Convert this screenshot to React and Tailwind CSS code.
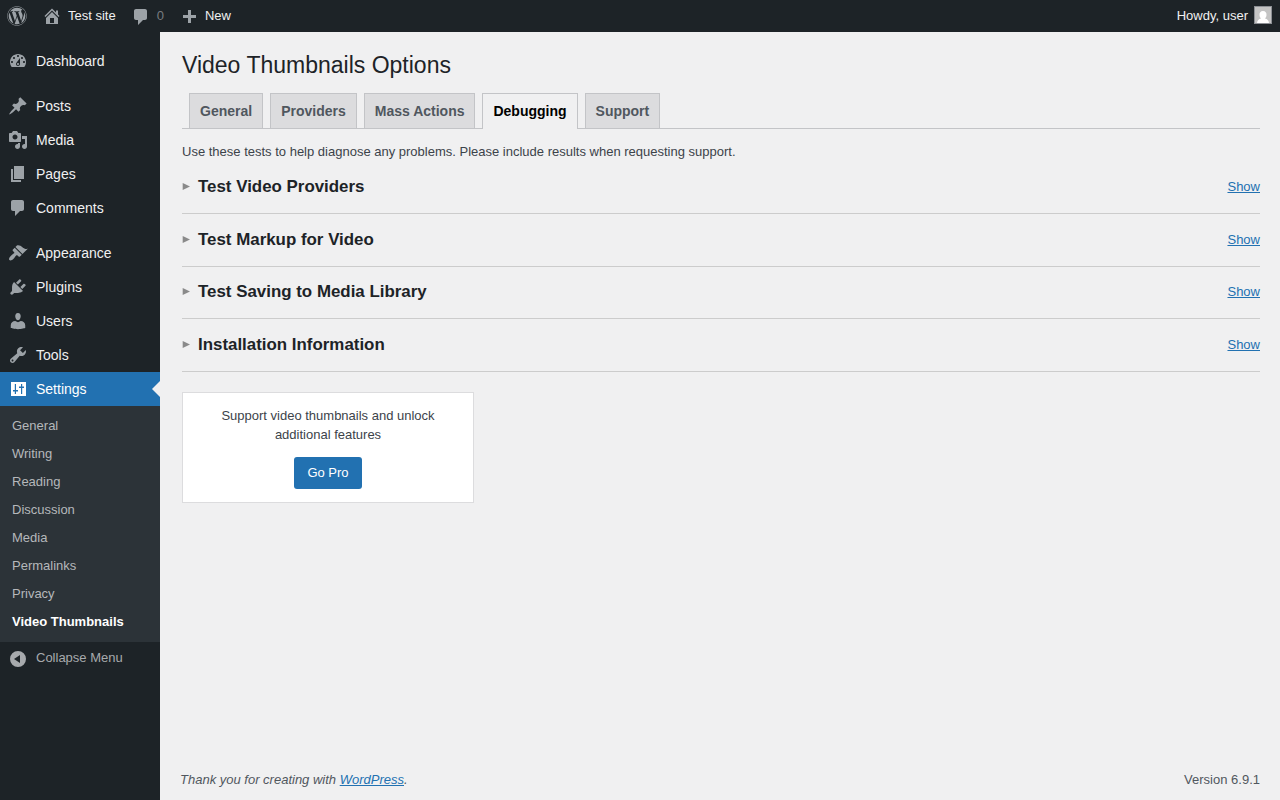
import React from "react";
import { FaWordpress } from "react-icons/fa";

const ICONS = {
  home: "M16 8.5l1.53 1.53-1.06 1.06L10 4.6l-6.47 6.49-1.06-1.06L10 2.5l4 4v-2h2v4zm-6-2.46l6 5.99V18H4v-5.97zM12 17v-5H8v5h4z",
  comments: "M5 2h9c1.1 0 2 .9 2 2v7c0 1.1-.9 2-2 2h-2l-5 5v-5H5c-1.1 0-2-.9-2-2V4c0-1.1.9-2 2-2z",
  plus: "M17 8v3h-5v5H9v-5H4V8h5V3h3v5h5z",
  dashboard:
    "M3.76 16h12.48c1.1-1.37 1.76-3.11 1.76-5 0-4.42-3.58-8-8-8s-8 3.58-8 8c0 1.89.66 3.63 1.76 5zM10 4c.55 0 1 .45 1 1s-.45 1-1 1-1-.45-1-1 .45-1 1-1zM6 6c.55 0 1 .45 1 1s-.45 1-1 1-1-.45-1-1 .45-1 1-1zm8 0c.55 0 1 .45 1 1s-.45 1-1 1-1-.45-1-1 .45-1 1-1zm-5.37 5.55L12 7v6c0 1.1-.9 2-2 2s-2-.9-2-2c0-.57.24-1.08.63-1.45zM4 10c.55 0 1 .45 1 1s-.45 1-1 1-1-.45-1-1 .45-1 1-1zm12 0c.55 0 1 .45 1 1s-.45 1-1 1-1-.45-1-1 .45-1 1-1zm-5 3c0-.55-.45-1-1-1s-1 .45-1 1 .45 1 1 1 1-.45 1-1z",
  post: "M10.44 3.02l1.82-1.82 6.36 6.35-1.83 1.82c-1.05-.68-2.48-.57-3.41.36l-.75.75c-.92.93-1.04 2.35-.35 3.41l-1.83 1.82-2.41-2.41-2.8 2.79c-.42.42-3.38 2.71-3.8 2.29s1.86-3.39 2.28-3.81l2.79-2.79L4.1 9.36l1.83-1.82c1.05.69 2.48.57 3.4-.36l.75-.75c.93-.92 1.05-2.35.36-3.41z",
  media:
    "M13 11V4c0-.55-.45-1-1-1h-1.67L9 1H5L3.67 3H2c-.55 0-1 .45-1 1v7c0 .55.45 1 1 1h10c.55 0 1-.45 1-1zM7 4.5c1.38 0 2.5 1.12 2.5 2.5S8.38 9.5 7 9.5 4.5 8.38 4.5 7 5.62 4.5 7 4.5zM14 6h5v10.5c0 1.38-1.12 2.5-2.5 2.5S14 17.88 14 16.5s1.12-2.5 2.5-2.5c.17 0 .34.02.5.05V9h-3V6zm-4 8.05V13h2v3.5c0 1.38-1.12 2.5-2.5 2.5S7 17.88 7 16.5 8.12 14 9.5 14c.17 0 .34.02.5.05z",
  page: "M6 15V2h10v13H6zm-1 1h8v2H3V5h2v11z",
  appearance:
    "M14.48 11.06L7.41 3.99l1.5-1.5c.5-.56 2.3-.47 3.51.32 1.21.8 1.43 1.28 2.91 2.1 1.18.64 2.45 1.26 4.45.85zm-.71.71L6.7 4.7 4.93 6.47c-.39.39-.39 1.02 0 1.41l1.06 1.06c.39.39.39 1.03 0 1.42-.6.6-1.43 1.11-2.21 1.69-.35.26-.7.53-1.01.84C1.43 14.23.4 16.08 1.4 17.07c.99 1 2.84-.03 4.18-1.36.31-.31.58-.66.85-1.02.57-.78 1.08-1.61 1.69-2.21.39-.39 1.02-.39 1.41 0l1.06 1.06c.39.39 1.02.39 1.41 0z",
  plugins:
    "M13.11 4.36L9.87 7.6 8 5.73l3.24-3.24c.35-.34 1.05-.2 1.56.32.52.51.66 1.21.31 1.55zm-8 1.77l.91-1.12 9.01 9.01-1.19.84c-.71.71-2.63 1.16-3.82 1.16H6.14L4.9 17.26c-.59.59-1.54.59-2.12 0-.59-.58-.59-1.53 0-2.12l1.24-1.24v-3.88c0-1.13.4-3.19 1.09-3.89zm7.26 3.97l3.24-3.24c.34-.35 1.04-.21 1.55.31.52.51.66 1.21.31 1.55l-3.24 3.25z",
  users:
    "M10 9.25c-2.27 0-2.73-3.44-2.73-3.44C7 4.02 7.82 2 9.97 2c2.16 0 2.98 2.02 2.71 3.81 0 0-.41 3.44-2.68 3.44zm0 2.1L12.72 10c2.39 0 4.52 1.900 4.52 4.200v2.800s-3.65 1.13-7.24 1.13c-3.65 0-7.24-1.13-7.24-1.13v-2.800c0-2.25 1.94-4.200 4.47-4.200z",
  tools:
    "M16.68 9.77c-1.34 1.34-3.3 1.67-4.95.99l-5.41 6.52c-.99.99-2.59.99-3.58 0s-.99-2.59 0-3.57l6.52-5.42c-.68-1.65-.35-3.61.99-4.95 1.28-1.28 3.12-1.62 4.72-1.06l-2.89 2.89 2.82 2.82 2.86-2.87c.53 1.58.18 3.39-1.08 4.65zM3.81 16.21c.4.39 1.04.39 1.43 0 .4-.4.4-1.04 0-1.43-.39-.4-1.03-.4-1.43 0-.39.39-.39 1.03 0 1.43z",
  settings:
    "M18 17V3H3v14h15zM8 11h2v1.500H8V15H6.800v-2.500H5V11h1.800V5H8v6zm5-2h-2V7.500h2V5h1.200v2.500H16V9h-1.800v6H13V9z",
  collapse: "M10 2a8 8 0 1 0 0 16 8 8 0 0 0 0-16zM12 14L6 10l6-4z",
};

function Icon({ name, className = "" }) {
  return (
    <svg viewBox="0 0 20 20" className={`size-5 shrink-0 fill-current ${className}`}>
      <path fillRule="evenodd" d={ICONS[name]} />
    </svg>
  );
}

const MENU = [
  [["dashboard", "Dashboard"]],
  [["post", "Posts"], ["media", "Media"], ["page", "Pages"], ["comments", "Comments"]],
  [["appearance", "Appearance"], ["plugins", "Plugins"], ["users", "Users"], ["tools", "Tools"], ["settings", "Settings"]],
];
const SUBMENU = ["General", "Writing", "Reading", "Discussion", "Media", "Permalinks", "Privacy", "Video Thumbnails"];
const TABS = ["General", "Providers", "Mass Actions", "Debugging", "Support"];
const TESTS = ["Test Video Providers", "Test Markup for Video", "Test Saving to Media Library", "Installation Information"];

function Toolbar() {
  return (
    <header className="flex h-8 shrink-0 items-center bg-[#1d2327] pr-2 pl-[7px] leading-8 text-[#f0f0f1]">
      <FaWordpress className="size-5 text-[#9ca2a7]" />
      <Icon name="home" className="ml-[15px] text-[#9ca2a7]" />
      <span className="ml-1.5">Test site</span>
      <Icon name="comments" className="mt-0.5 ml-[15px] text-[#9ca2a7]" />
      <span className="ml-1.5 text-[#787c80]">0</span>
      <Icon name="plus" className="mt-0.5 ml-[15px] text-[#9ca2a7]" />
      <span className="ml-1.5">New</span>
      <span className="ml-auto">Howdy, user</span>
      <svg viewBox="0 0 18 18" className="-mt-0.5 ml-1.5 size-[18px]">
        <path fill="#8c8f94" d="M0 0h18v18H0z" />
        <path fill="#c4c4c4" d="M1 1h16v16H1z" />
        <path fill="#fff" d="M9 5a3.800 3.800 0 0 1 3.500 4c0 1.500-.7 2.700-1.500 3.400 2.300.5 3.700 1.800 4 4.600H3c.3-2.800 1.700-4.100 4-4.600C6.200 11.700 5.500 10.500 5.500 9A3.800 3.800 0 0 1 9 5z" />
      </svg>
    </header>
  );
}

function Sidebar() {
  return (
    <nav className="w-40 shrink-0 bg-[#1d2327] pt-3">
      {MENU.map((group, i) => (
        <ul key={i} className="mb-[11px] last-of-type:mb-0">
          {group.map(([icon, label]) => {
            const active = label === "Settings";
            return (
              <li
                key={label}
                className={`flex h-[34px] items-center pl-2 text-sm ${active ? "bg-[#2271b1] text-white" : "text-[#f0f0f1]"}`}
              >
                <Icon name={icon} className={active ? "text-white" : "text-[#9ca2a7]"} />
                <span className="ml-2">{label}</span>
                {active && (
                  <span className="ml-auto border-y-8 border-r-8 border-y-transparent border-r-[#f0f0f1]" />
                )}
              </li>
            );
          })}
        </ul>
      ))}
      <div className="bg-[#2c3338] pt-1.5 pb-1.5 text-[#b5b8bb]">
        {SUBMENU.map((label) => (
          <div
            key={label}
            className={`h-7 pl-3 leading-7 ${label === "Video Thumbnails" ? "font-semibold text-white" : ""}`}
          >
            {label}
          </div>
        ))}
      </div>
      <div className="flex h-[34px] items-center pl-2 text-[#a7aaad]">
        <Icon name="collapse" />
        <span className="-mt-0.5 ml-2">Collapse Menu</span>
      </div>
    </nav>
  );
}

export default function App() {
  return (
    <div className="flex h-[800px] w-[1280px] flex-col overflow-hidden bg-[#f0f0f1] font-['Liberation_Sans',Arial,sans-serif] text-[13px] text-[#3c434a]">
      <Toolbar />
      <div className="flex grow">
        <Sidebar />
        <main className="flex grow flex-col pr-5 pl-[22px]">
          <h1 className="mt-[18px] h-[30px] text-[23px] leading-[30px] text-[#1d2327]">Video Thumbnails Options</h1>
          <div className="mt-[13px] flex h-9 shrink-0 border-b border-[#c3c4c7] pl-[7px] text-sm leading-6 font-semibold">
            {TABS.map((tab) => (
              <a
                key={tab}
                className={`mr-[7px] border border-b-0 border-[#c3c4c7] px-2.5 py-[5px] ${
                  tab === "Debugging" ? "-mb-px bg-[#f0f0f1] text-black" : "bg-[#dcdcde] text-[#50575e]"
                }`}
              >
                {tab}
              </a>
            ))}
          </div>
          <p className="mt-[13px] leading-[19.500px]">
            Use these tests to help diagnose any problems. Please include results when requesting support.
          </p>
          <section className="-mt-[0.1px]">
            {TESTS.map((test) => (
              <div key={test} className="flex h-[52.600px] items-start border-b border-[#ccc] pt-[14.800px]">
                <svg viewBox="0 0 8 8" className="mt-[6.900px] size-2 fill-[#8a8a8a]">
                  <path d="M.7 0L8 3.500 .7 7z" />
                </svg>
                <h3 className="ml-2 text-[16.900px] leading-[22px] font-semibold text-[#1d2327]">{test}</h3>
                <a className="ml-auto leading-[22px] text-[#2271b1] underline">Show</a>
              </div>
            ))}
          </section>
          <aside className="mt-5 flex h-[111px] w-[292px] flex-col items-center border border-[#dcdcde] bg-white px-5 pt-[13px] text-center leading-[19.500px]">
            <p className="w-[230px]">Support video thumbnails and unlock additional features</p>
            <a className="mt-3 h-8 rounded-[3px] bg-[#2271b1] px-[13.500px] leading-8 text-white">Go Pro</a>
          </aside>
          <footer className="mt-auto -ml-0.5 flex justify-between pb-2.5 leading-[20px] text-[#50575e]">
            <p className="italic">
              Thank you for creating with <a className="text-[#2271b1] underline">WordPress</a>.
            </p>
            <p>Version 6.9.1</p>
          </footer>
        </main>
      </div>
    </div>
  );
}
